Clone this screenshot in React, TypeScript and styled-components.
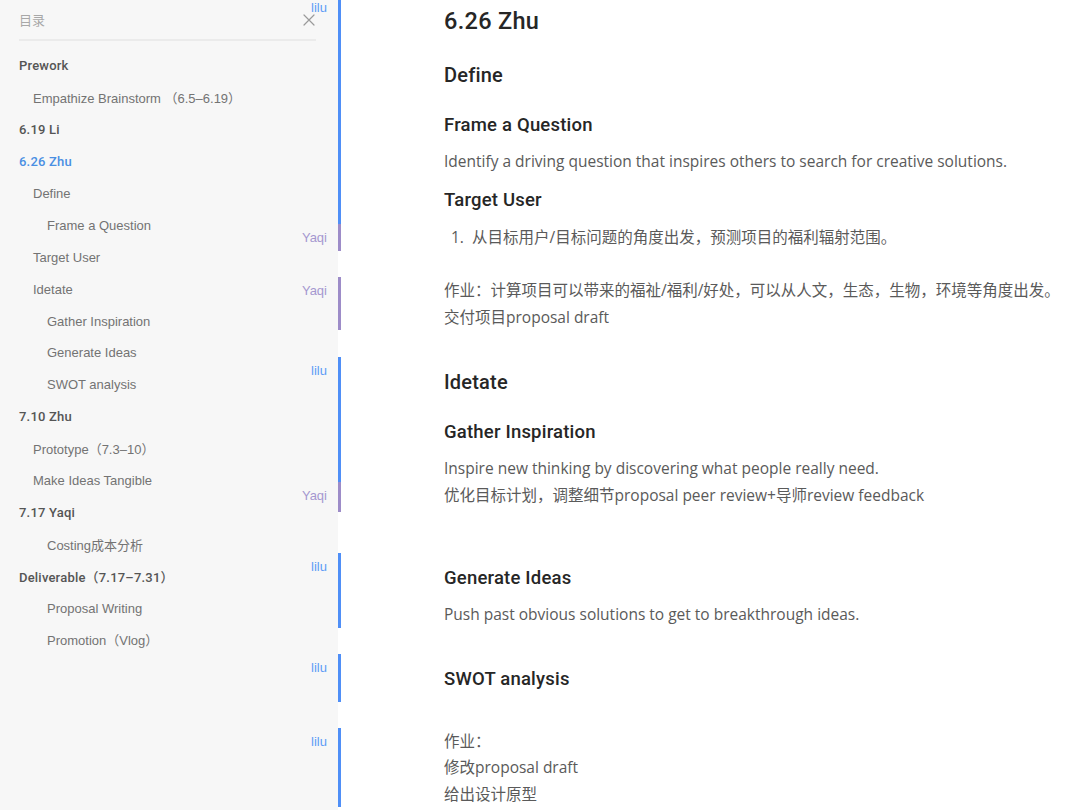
import React from "react";
import styled, { createGlobalStyle } from "styled-components";

// Page-wide reset: no body margin, white page, nothing scrolls
const GlobalStyle = createGlobalStyle`
  html, body {
    margin: 0;
    padding: 0;
    background: #ffffff;
    overflow: hidden;
  }
  body {
    font-family: "Liberation Sans", "Noto Sans CJK SC", sans-serif;
  }
`;

type AuthorName = "lilu" | "Yaqi";

const authorColors: Record<AuthorName, { bar: string; text: string }> = {
  lilu: { bar: "#4f8ff7", text: "#5c9cf6" },
  Yaqi: { bar: "#9d8cc8", text: "#a597d0" },
};

const headingFont = `Roboto, "Noto Sans CJK SC", sans-serif`;

const Page = styled.div`
  display: grid;
  grid-template-columns: 338px 1fr;
  height: 810px;
  overflow: hidden;
`;

// Table of contents on the left
const Sidebar = styled.aside`
  background: #f7f7f7;
  padding: 0 22px 0 19px;
`;

const TocHeader = styled.div`
  height: 39px;
  border-bottom: 2px solid #ebebeb;
  display: flex;
  align-items: center;
  justify-content: space-between;
  font-size: 13px;
  color: #a8a8a8;
`;

const CloseButton = styled.button`
  border: 0;
  background: none;
  padding: 0;
  width: 14px;
  height: 14px;
  display: flex;
  align-items: center;
  justify-content: center;
  cursor: pointer;
`;

const TocList = styled.ul`
  list-style: none;
  margin: 0;
  padding: 9px 0 0;
`;

const TocItem = styled.li<{ $level: number; $active?: boolean }>`
  height: 31.9px;
  display: flex;
  align-items: center;
  padding-left: ${(p) => (p.$level - 1) * 14}px;
  font-size: 13px;
  white-space: nowrap;
  font-family: ${(p) => (p.$level === 1 ? headingFont : "inherit")};
  font-weight: ${(p) => (p.$level === 1 ? 500 : 400)};
  letter-spacing: ${(p) => (p.$level === 1 ? "0.2px" : "0")};
  color: ${(p) => (p.$active ? "#4a8fe3" : p.$level === 1 ? "#555555" : "#737373")};
`;

// Document on the right
const Doc = styled.main`
  font-family: "Open Sans", "Noto Sans CJK SC", sans-serif;
  margin-top: -6px;
  min-width: 0;
`;

const Block = styled.section<{ $author?: AuthorName; $tail?: number }>`
  position: relative;
  border-left: 3px solid
    ${(p) => (p.$author ? authorColors[p.$author].bar : "transparent")};
  padding: 0 0 ${(p) => p.$tail ?? 0}px 103px;
`;

const AuthorTag = styled.span<{ $author: AuthorName }>`
  position: absolute;
  right: calc(100% + 14px);
  top: 6px;
  font-family: "Liberation Sans", sans-serif;
  font-size: 13px;
  line-height: 16px;
  color: ${(p) => authorColors[p.$author].text};
`;

const Gap = styled.div<{ $h: number }>`
  height: ${(p) => p.$h}px;
`;

const H1 = styled.h1`
  margin: 0;
  padding: 10px 0 12px;
  font-family: ${headingFont};
  font-size: 23.5px;
  line-height: 34px;
  font-weight: 500;
  letter-spacing: 0.3px;
  color: #262626;
`;

const H2 = styled.h2`
  margin: 0;
  padding: 10px 0;
  font-family: ${headingFont};
  font-size: 20px;
  line-height: 30px;
  font-weight: 500;
  letter-spacing: 0.2px;
  color: #262626;
`;

const H3 = styled.h3`
  margin: 0;
  padding: 12px 0 10px;
  font-family: ${headingFont};
  font-size: 18.5px;
  line-height: 26px;
  font-weight: 500;
  letter-spacing: 0.2px;
  color: #262626;
`;

const Para = styled.p`
  margin: 0;
  font-size: 15.5px;
  line-height: 26.5px;
  color: #5a5a5a;
  white-space: nowrap;
`;

const Ordered = styled.ol`
  margin: 0;
  padding-left: 28px;
  font-size: 15.5px;
  line-height: 27px;
  color: #5a5a5a;
  white-space: nowrap;

  li::marker {
    content: "1.  ";
  }
`;

const toc: { label: string; level: number; active?: boolean }[] = [
  { label: "Prework", level: 1 },
  { label: "Empathize Brainstorm （6.5–6.19）", level: 2 },
  { label: "6.19 Li", level: 1 },
  { label: "6.26 Zhu", level: 1, active: true },
  { label: "Define", level: 2 },
  { label: "Frame a Question", level: 3 },
  { label: "Target User", level: 2 },
  { label: "Idetate", level: 2 },
  { label: "Gather Inspiration", level: 3 },
  { label: "Generate Ideas", level: 3 },
  { label: "SWOT analysis", level: 3 },
  { label: "7.10 Zhu", level: 1 },
  { label: "Prototype（7.3–10）", level: 2 },
  { label: "Make Ideas Tangible", level: 2 },
  { label: "7.17 Yaqi", level: 1 },
  { label: "Costing成本分析", level: 3 },
  { label: "Deliverable（7.17–7.31）", level: 1 },
  { label: "Proposal Writing", level: 3 },
  { label: "Promotion（Vlog）", level: 3 },
];

const CloseIcon = () => (
  <svg width="12" height="12" viewBox="0 0 12 12" fill="none">
    <path d="M1 1L11 11M11 1L1 11" stroke="#9a9a9a" strokeWidth="1.2" strokeLinecap="round" />
  </svg>
);

const App: React.FC = () => {
  return (
    <Page>
      <GlobalStyle />
      <Sidebar>
        <TocHeader>
          <span>目录</span>
          <CloseButton aria-label="close">
            <CloseIcon />
          </CloseButton>
        </TocHeader>
        <TocList>
          {toc.map((item) => (
            <TocItem key={item.label} $level={item.level} $active={item.active}>
              {item.label}
            </TocItem>
          ))}
        </TocList>
      </Sidebar>

      <Doc>
        <Block $author="lilu" $tail={1.5}>
          <AuthorTag $author="lilu">lilu</AuthorTag>
          <H1>6.26 Zhu</H1>
          <H2>Define</H2>
          <H3>Frame a Question</H3>
          <Para>Identify a driving question that inspires others to search for creative solutions.</Para>
          <H3>Target User</H3>
        </Block>
        <Block $author="Yaqi">
          <AuthorTag $author="Yaqi">Yaqi</AuthorTag>
          <Ordered>
            <li>从目标用户/目标问题的角度出发，预测项目的福利辐射范围。</li>
          </Ordered>
        </Block>
        <Gap $h={26} />
        <Block $author="Yaqi">
          <AuthorTag $author="Yaqi">Yaqi</AuthorTag>
          <Para>作业：计算项目可以带来的福祉/福利/好处，可以从人文，生态，生物，环境等角度出发。</Para>
          <Para>交付项目proposal draft</Para>
        </Block>
        <Gap $h={27} />
        <Block $author="lilu">
          <AuthorTag $author="lilu">lilu</AuthorTag>
          <H2>Idetate</H2>
          <H3>Gather Inspiration</H3>
          <Para>Inspire new thinking by discovering what people really need.</Para>
        </Block>
        <Block $author="Yaqi" $tail={4}>
          <AuthorTag $author="Yaqi">Yaqi</AuthorTag>
          <Para>优化目标计划，调整细节proposal peer review+导师review feedback</Para>
        </Block>
        <Gap $h={41} />
        <Block $author="lilu">
          <AuthorTag $author="lilu">lilu</AuthorTag>
          <H3>Generate Ideas</H3>
          <Para>Push past obvious solutions to get to breakthrough ideas.</Para>
        </Block>
        <Gap $h={26} />
        <Block $author="lilu">
          <AuthorTag $author="lilu">lilu</AuthorTag>
          <H3>SWOT analysis</H3>
        </Block>
        <Gap $h={26} />
        <Block $author="lilu">
          <AuthorTag $author="lilu">lilu</AuthorTag>
          <Para>作业：</Para>
          <Para>修改proposal draft</Para>
          <Para>给出设计原型</Para>
        </Block>
      </Doc>
    </Page>
  );
};

export default App;
